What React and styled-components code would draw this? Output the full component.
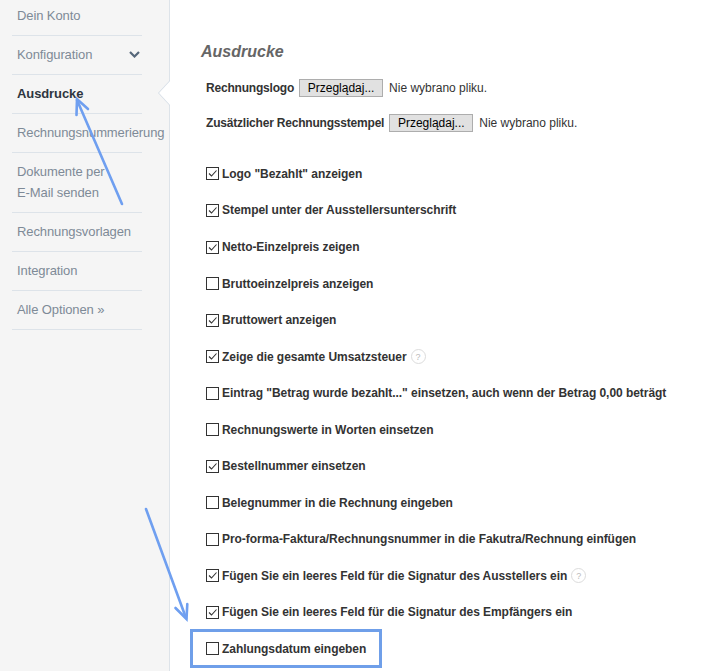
import React from "react";
import styled, { createGlobalStyle } from "styled-components";

const menu = [
  { label: "Dein Konto" },
  { label: "Konfiguration", chevron: true },
  { label: "Ausdrucke", active: true },
  { label: "Rechnungsnummerierung" },
  { label: ["Dokumente per", "E-Mail senden"] },
  { label: "Rechnungsvorlagen" },
  { label: "Integration" },
  { label: "Alle Optionen »" },
];

const options = [
  { text: 'Logo "Bezahlt" anzeigen', checked: true },
  { text: "Stempel unter der Ausstellersunterschrift", checked: true },
  { text: "Netto-Einzelpreis zeigen", checked: true },
  { text: "Bruttoeinzelpreis anzeigen" },
  { text: "Bruttowert anzeigen", checked: true },
  { text: "Zeige die gesamte Umsatzsteuer", checked: true, help: true },
  { text: 'Eintrag "Betrag wurde bezahlt..." einsetzen, auch wenn der Betrag 0,00 beträgt' },
  { text: "Rechnungswerte in Worten einsetzen" },
  { text: "Bestellnummer einsetzen", checked: true },
  { text: "Belegnummer in die Rechnung eingeben" },
  { text: "Pro-forma-Faktura/Rechnungsnummer in die Fakutra/Rechnung einfügen" },
  { text: "Fügen Sie ein leeres Feld für die Signatur des Ausstellers ein", checked: true, help: true },
  { text: "Fügen Sie ein leeres Feld für die Signatur des Empfängers ein", checked: true },
  { text: "Zahlungsdatum eingeben", highlight: true },
];

const App = () => {
  return (
    <Page>
      <GlobalStyle />
      <Sidebar>
        <Menu>
          {menu.map((item, i) => (
            <MenuItem key={i} active={item.active}>
              <span>
                {Array.isArray(item.label)
                  ? item.label.map((l, j) => <div key={j}>{l}</div>)
                  : item.label}
              </span>
              {item.chevron && (
                <svg width="11" height="7" viewBox="0 0 11 7">
                  <path d="M1 1 L5.5 5.5 L10 1" fill="none" stroke="#56677a" strokeWidth="2.2" />
                </svg>
              )}
            </MenuItem>
          ))}
        </Menu>
      </Sidebar>
      <Main>
        <Title>Ausdrucke</Title>
        <Form>
          <FileRow first>
            <FieldLabel>Rechnungslogo</FieldLabel>
            <BrowseButton>Przeglądaj...</BrowseButton>
            <FileName>Nie wybrano pliku.</FileName>
          </FileRow>
          <FileRow>
            <FieldLabel>Zusätzlicher Rechnungsstempel</FieldLabel>
            <BrowseButton>Przeglądaj...</BrowseButton>
            <FileName>Nie wybrano pliku.</FileName>
          </FileRow>
          <Options>
            {options.map((o, i) => (
              <OptionRow key={i} highlight={o.highlight}>
                <Box>
                  {o.checked && (
                    <svg width="11" height="11" viewBox="0 0 11 11">
                      <path d="M2 5.5 L4.5 8 L9.5 2.5" fill="none" stroke="#333" strokeWidth="1.1" />
                    </svg>
                  )}
                </Box>
                <OptionText>{o.text}</OptionText>
                {o.help && <Help>?</Help>}
              </OptionRow>
            ))}
          </Options>
        </Form>
      </Main>
      <Annotations width="713" height="671" viewBox="0 0 713 671">
        <g stroke="#6f9ff0" strokeWidth="2.6" strokeLinecap="round" fill="none">
          <path d="M122 204 L77 100" />
          <path d="M76.5 115 L77 99 L88 109" />
          <path d="M146 509 L186 618" />
          <path d="M175.5 608 L186.5 619 L187.3 604" />
        </g>
      </Annotations>
    </Page>
  );
};

const GlobalStyle = createGlobalStyle`
  html, body {
    margin: 0;
    padding: 0;
    background: #fff;
  }
  body {
    font-family: "Liberation Sans", Arial, sans-serif;
  }
`;

const Page = styled.div`
  display: flex;
  width: 713px;
  height: 671px;
  overflow: hidden;
  position: relative;
`;

const Sidebar = styled.div`
  width: 170px;
  flex-shrink: 0;
  box-sizing: border-box;
  background: #f5f5f5;
  border-right: 1px solid #dde3e9;
`;

const Menu = styled.div`
  margin: -3px 0 0 12px;
  width: 130px;
`;

const MenuItem = styled.div`
  position: relative;
  display: flex;
  align-items: center;
  justify-content: space-between;
  padding: 8px 2px 9px 5px;
  line-height: 21px;
  font-size: 13px;
  letter-spacing: -0.1px;
  white-space: nowrap;
  border-bottom: 1px solid #dde3e9;
  color: ${({ active }) => (active ? "#2e3640" : "#7e8a97")};
  font-weight: ${({ active }) => (active ? "bold" : "normal")};

  ${({ active }) =>
    active &&
    `
    &:before, &:after {
      content: "";
      position: absolute;
      top: 5px;
      width: 0;
      height: 0;
      border-top: 13px solid transparent;
      border-bottom: 13px solid transparent;
    }
    &:before {
      right: -28px;
      border-right: 12px solid #d5dde6;
    }
    &:after {
      right: -29px;
      border-right: 12px solid #fff;
    }
  `}
`;

const Main = styled.div`
  flex: 1;
  padding: 42px 0 0 31px;
  color: #333;
`;

const Title = styled.h2`
  margin: 0;
  font-size: 16px;
  line-height: 20px;
  font-weight: bold;
  font-style: italic;
  color: #666;
`;

const Form = styled.div`
  padding-left: 5px;
`;

const FileRow = styled.div`
  display: flex;
  align-items: center;
  height: 20px;
  margin-top: ${({ first }) => (first ? "16px" : "15px")};
  font-size: 12px;
`;

const FieldLabel = styled.span`
  font-weight: bold;
  color: #333;
  letter-spacing: -0.2px;
`;

const BrowseButton = styled.button`
  width: 84px;
  height: 18px;
  margin: 0 6px 0 5px;
  padding: 0;
  font-family: inherit;
  font-size: 12px;
  color: #000;
  background: #e1e1e1;
  border: 1px solid #adadad;
  border-radius: 0;
`;

const FileName = styled.span`
  color: #333;
`;

const Options = styled.div`
  margin-top: 22.7px;
`;

const OptionRow = styled.div`
  position: relative;
  display: flex;
  align-items: center;
  height: 36.54px;
  font-size: 12px;

  ${({ highlight }) =>
    highlight &&
    `
    &:after {
      content: "";
      position: absolute;
      left: -16px;
      top: -2px;
      width: 192px;
      height: 39px;
      box-sizing: border-box;
      border: 3px solid #6f9fe9;
    }
  `}
`;

const Box = styled.span`
  width: 13px;
  height: 13px;
  box-sizing: border-box;
  border: 1px solid #333;
  background: #fff;
  display: flex;
  align-items: center;
  justify-content: center;
  flex-shrink: 0;
  margin-right: 3px;
`;

const OptionText = styled.span`
  font-weight: bold;
  color: #333;
  white-space: nowrap;
  letter-spacing: -0.05px;
`;

const Help = styled.span`
  width: 15px;
  height: 15px;
  margin-left: 4px;
  box-sizing: border-box;
  border: 1px solid #dcdcdc;
  border-radius: 50%;
  font-size: 9px;
  color: #bbb;
  display: flex;
  align-items: center;
  justify-content: center;
`;

const Annotations = styled.svg`
  position: absolute;
  left: 0;
  top: 0;
  pointer-events: none;
`;

export default App;
